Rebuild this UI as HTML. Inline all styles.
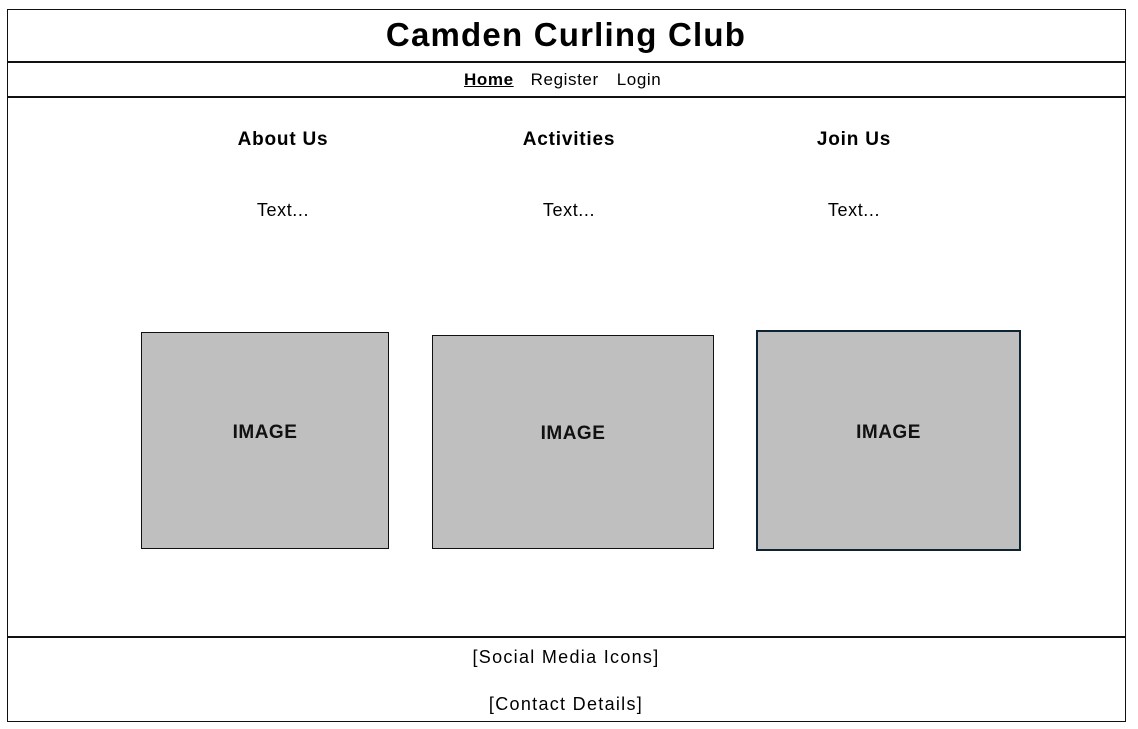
<!DOCTYPE html>
<html><head><meta charset="utf-8"><style>
body{margin:0;width:1138px;height:729px;background:#fff;position:relative;font-family:"Liberation Sans",sans-serif;color:#000;overflow:hidden}
.a{position:absolute}
.c{position:absolute;transform:translateX(-50%);white-space:nowrap}
.img{position:absolute;background:#bfbfbf;border:1px solid #111;box-sizing:border-box;display:flex;align-items:center;justify-content:center;font-weight:bold;font-size:19px;color:#111;letter-spacing:0.5px}
.img span{position:relative;top:-8px}
</style></head><body>
<div class="a" style="left:7px;top:9px;width:1119px;height:713px;border:1px solid #111;box-sizing:border-box"></div>
<div class="a" style="left:7px;top:61px;width:1119px;height:2px;background:#111"></div>
<div class="a" style="left:7px;top:96px;width:1119px;height:2px;background:#111"></div>
<div class="a" style="left:7px;top:636px;width:1119px;height:2px;background:#111"></div>
<div class="c" style="left:566px;top:16px;font-size:33px;font-weight:bold;letter-spacing:1.2px">Camden Curling Club</div>
<div class="a" style="left:464px;top:70px;font-size:17px;letter-spacing:0.6px;white-space:nowrap"><b style="text-decoration:underline">Home</b><span style="margin-left:17px">Register</span><span style="margin-left:18px">Login</span></div>
<div class="c" style="left:283px;top:129px;font-size:19px;font-weight:bold;letter-spacing:0.8px">About Us</div>
<div class="c" style="left:569px;top:129px;font-size:19px;font-weight:bold;letter-spacing:0.8px">Activities</div>
<div class="c" style="left:854px;top:129px;font-size:19px;font-weight:bold;letter-spacing:0.8px">Join Us</div>
<div class="c" style="left:283px;top:200px;font-size:18px;letter-spacing:0.6px">Text...</div>
<div class="c" style="left:569px;top:200px;font-size:18px;letter-spacing:0.6px">Text...</div>
<div class="c" style="left:854px;top:200px;font-size:18px;letter-spacing:0.6px">Text...</div>
<div class="img" style="left:141px;top:332px;width:248px;height:217px"><span>IMAGE</span></div>
<div class="img" style="left:432px;top:335px;width:282px;height:214px"><span>IMAGE</span></div>
<div class="img" style="left:756px;top:330px;width:265px;height:221px;border:2px solid #0d2533"><span>IMAGE</span></div>
<div class="c" style="left:566px;top:647px;font-size:18px;letter-spacing:1.3px">[Social Media Icons]</div>
<div class="c" style="left:566px;top:694px;font-size:18px;letter-spacing:1.3px">[Contact Details]</div>
</body></html>
